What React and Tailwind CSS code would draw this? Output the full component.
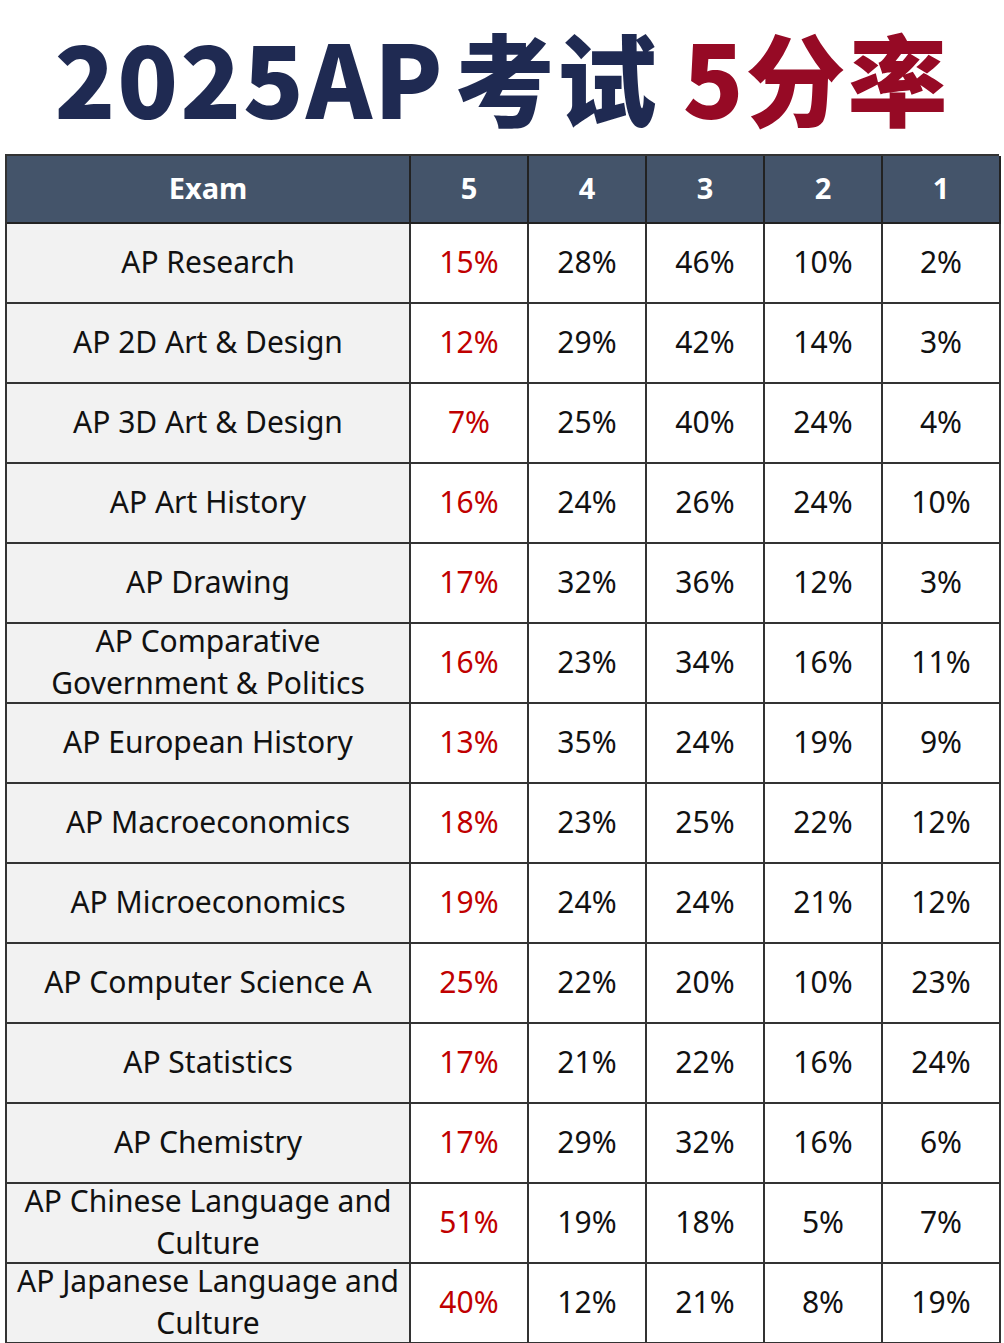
import React from "react";

const rows = [
  [["AP Research"], 15, 28, 46, 10, 2],
  [["AP 2D Art & Design"], 12, 29, 42, 14, 3],
  [["AP 3D Art & Design"], 7, 25, 40, 24, 4],
  [["AP Art History"], 16, 24, 26, 24, 10],
  [["AP Drawing"], 17, 32, 36, 12, 3],
  [["AP Comparative", "Government & Politics"], 16, 23, 34, 16, 11],
  [["AP European History"], 13, 35, 24, 19, 9],
  [["AP Macroeconomics"], 18, 23, 25, 22, 12],
  [["AP Microeconomics"], 19, 24, 24, 21, 12],
  [["AP Computer Science A"], 25, 22, 20, 10, 23],
  [["AP Statistics"], 17, 21, 22, 16, 24],
  [["AP Chemistry"], 17, 29, 32, 16, 6],
  [["AP Chinese Language and", "Culture"], 51, 19, 18, 5, 7],
  [["AP Japanese Language and", "Culture"], 40, 12, 21, 8, 19],
];

export default function App() {
  return (
    <div className="w-[1004px] bg-white">
      <div className="h-[154px] flex items-center justify-center pb-[2px]">
        <h1 className="text-[100px] leading-none font-black tracking-[2px] font-['Noto_Sans_CJK_SC',sans-serif] whitespace-nowrap">
          <span className="text-[#1f2a52]">2025AP</span>
          <span className="text-[#1f2a52] ml-[10px]">考试</span>
          <span className="text-[#960a25] ml-[24px]">5分率</span>
        </h1>
      </div>
      <div className="ml-[5px] w-[994px] grid grid-cols-[404px_repeat(5,118px)] border-l-2 border-t-2 border-[#333] font-['Noto_Sans','Open_Sans',sans-serif]">
        {["Exam", "5", "4", "3", "2", "1"].map((h) => (
          <div
            key={h}
            className="h-[68px] bg-[#44546a] border-r-2 border-b-2 border-[#222] flex items-center justify-center text-white font-bold text-[29px] pb-[2px]"
          >
            {h}
          </div>
        ))}
        {rows.map(([name, ...vals], i) => (
          <React.Fragment key={i}>
            <div className="h-[80px] bg-[#f2f2f2] border-r-2 border-b-2 border-[#333] flex items-center justify-center text-center text-[30px] leading-[42px] text-[#111] pb-[3px]">
              <div>
                {name.map((l, j) => (
                  <div key={j}>{l}</div>
                ))}
              </div>
            </div>
            {vals.map((v, j) => (
              <div
                key={j}
                className={
                  "h-[80px] bg-white border-r-2 border-b-2 border-[#333] flex items-center justify-center text-[30px] pb-[3px] " +
                  (j === 0 ? "text-[#c00000]" : "text-[#111]")
                }
              >
                {v}%
              </div>
            ))}
          </React.Fragment>
        ))}
      </div>
    </div>
  );
}
